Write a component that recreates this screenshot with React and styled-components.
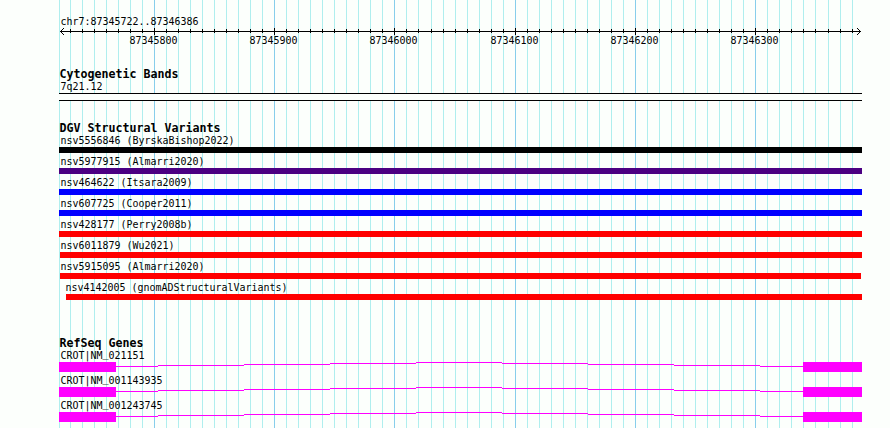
import React from "react";
import styled, { createGlobalStyle } from "styled-components";

const GRID = Array.from({ length: 66 }, (_, i) => ({
  x: 11 + 12 * i + Math.floor((i + 3) / 33),
  major: i % 10 === 7,
  label: 87345730 + i * 10,
}));

const VARIANTS = [
  { name: "nsv5556846 (ByrskaBishop2022)", color: "#000000" },
  { name: "nsv5977915 (Almarri2020)", color: "#4b0082" },
  { name: "nsv464622 (Itsara2009)", color: "#0000ff" },
  { name: "nsv607725 (Cooper2011)", color: "#0000ff" },
  { name: "nsv428177 (Perry2008b)", color: "#ff0000" },
  { name: "nsv6011879 (Wu2021)", color: "#ff0000", start: 1 },
  { name: "nsv5915095 (Almarri2020)", color: "#ff0000", start: 1, end: 1 },
  { name: "nsv4142005 (gnomADStructuralVariants)", color: "#ff0000", start: 7, indent: 5 },
];

const GENES = ["021151", "001143935", "001243745"];

// intron line, drawn as flat steps rising to the middle: [from, to, y]
const INTRON = [
  [57, 99, 4],
  [99, 185, 3],
  [185, 271, 2],
  [271, 357, 1],
  [357, 443, 0],
  [443, 529, 1],
  [529, 615, 2],
  [615, 701, 3],
  [701, 744, 4],
];

const Ruler = () => (
  <S.Ruler viewBox="0 0 803 20" shapeRendering="crispEdges">
    <rect x="1" y="6" width="801" height="1" />
    {GRID.map(({ x, major }) => (
      <rect key={x} x={x} y={major ? 3 : 4} width="1" height={major ? 7 : 4} />
    ))}
    <path d="M1 6h1v1h-1zM2 5h1v1h-1zM3 4h1v1h-1zM4 3h1v1h-1zM2 7h1v1h-1zM3 8h1v1h-1zM4 9h1v1h-1z" />
    <path d="M801 6h1v1h-1zM800 5h1v1h-1zM799 4h1v1h-1zM798 3h1v1h-1zM800 7h1v1h-1zM799 8h1v1h-1zM798 9h1v1h-1z" />
    {GRID.filter((g) => g.major).map(({ x, label }) => (
      <text key={label} x={x - 24.5} y="19" textLength="48">
        {label}
      </text>
    ))}
  </S.Ruler>
);

const Gene = ({ accession }) => (
  <S.Gene>
    <Label>
      CROT|NM<S.Underscore>_</S.Underscore>
      {accession}
    </Label>
    <S.Model>
      <S.Exon $width={57} />
      <S.Intron viewBox="57 0 687 10" shapeRendering="crispEdges">
        {INTRON.map(([from, to, y]) => (
          <rect key={from} x={from} y={y} width={to - from} height="1" />
        ))}
      </S.Intron>
      <S.Exon $width={59} />
    </S.Model>
  </S.Gene>
);

const App = () => {
  return (
    <S.Wrap>
      <GlobalStyle />
      <S.Grid viewBox="0 0 803 428" shapeRendering="crispEdges">
        <rect x="0" y="0" width="1" height="428" fill="#afeeee" />
        {GRID.map(({ x, major }) => (
          <rect key={x} x={x} y="0" width="1" height="428" fill={major ? "#87ceeb" : "#afeeee"} />
        ))}
      </S.Grid>
      <S.Tracks>
        <Label>chr7:87345722..87346386</Label>
        <Ruler />
        <S.Section $gap={23}>
          <Title>Cytogenetic Bands</Title>
          <Label>7q21.12</Label>
          <S.Band />
        </S.Section>
        <S.Section $gap={21}>
          <Title>DGV Structural Variants</Title>
          {VARIANTS.map((v) => (
            <S.Variant key={v.name}>
              <Label $indent={v.indent}>{v.name}</Label>
              <S.Bar $color={v.color} $start={v.start} $end={v.end} />
            </S.Variant>
          ))}
        </S.Section>
        <S.Section $gap={35}>
          <Title>RefSeq Genes</Title>
          {GENES.map((accession) => (
            <Gene key={accession} accession={accession} />
          ))}
        </S.Section>
      </S.Tracks>
    </S.Wrap>
  );
};

const GlobalStyle = createGlobalStyle`
  body {
    margin: 0;
    background: #fcfffc;
  }
`;

const Label = styled.div`
  height: 12px;
  padding-left: ${({ $indent = 0 }) => 1.5 + $indent}px;
  font-size: 9.97px;
  line-height: 14px;
  white-space: pre;
`;

const Title = styled.div`
  height: 12px;
  padding-left: 0.5px;
  font-size: 11.63px;
  font-weight: bold;
  line-height: 12px;
  white-space: pre;
`;

const S = {
  Wrap: styled.div`
    display: grid;
    width: 890px;
    height: 428px;
    padding-left: 59px;
    box-sizing: border-box;
    overflow: hidden;
    color: #000;
    font-family: "DejaVu Sans Mono", monospace;
  `,
  Grid: styled.svg`
    grid-area: 1 / 1;
    width: 803px;
    height: 428px;
  `,
  Tracks: styled.div`
    grid-area: 1 / 1;
    display: flex;
    flex-direction: column;
    width: 803px;
    height: 413px;
    padding-top: 15px;
    z-index: 1;
  `,
  Ruler: styled.svg`
    flex: none;
    width: 803px;
    height: 20px;
    margin-top: -2px;
    font-size: 9.97px;
  `,
  Section: styled.div`
    margin-top: ${({ $gap }) => $gap}px;
  `,
  Band: styled.div`
    height: 6px;
    margin-top: 1px;
    border: solid #000;
    border-width: 1px 0;
    background: #fcfffc;
  `,
  Variant: styled.div`
    height: 21px;
  `,
  Bar: styled.div`
    height: 6px;
    margin: 1px ${({ $end = 0 }) => $end}px 0 ${({ $start = 0 }) => $start}px;
    background: ${({ $color }) => $color};
  `,
  Gene: styled.div`
    height: 25px;
  `,
  /* lifted so that the exon below does not cover it */
  Underscore: styled.span`
    line-height: 0;
    vertical-align: 2px;
  `,
  Model: styled.div`
    display: flex;
    height: 10px;
    margin-top: 1px;
  `,
  Exon: styled.div`
    width: ${({ $width }) => $width}px;
    background: #ff00ff;
  `,
  Intron: styled.svg`
    width: 687px;
    height: 10px;
    fill: #ff00ff;
  `,
};

export default App;
